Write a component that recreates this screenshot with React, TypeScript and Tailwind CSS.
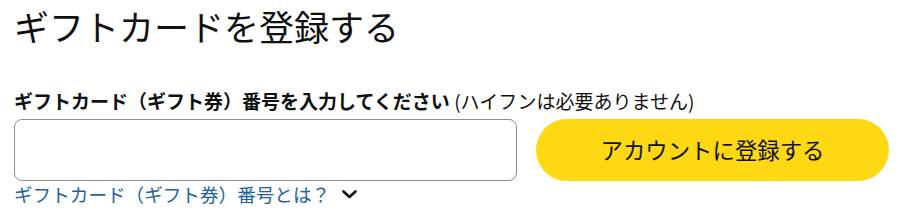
import React from "react";

export default function App() {
  return (
    <div
      className="w-[899px] h-[215px] bg-white pl-[14px] text-[#0f1111] overflow-hidden"
      style={{ fontFamily: '"Noto Sans CJK JP", "Noto Sans", sans-serif' }}
    >
      <h1 className="text-[35px] leading-[52px] font-normal">ギフトカードを登録する</h1>
      <div className="mt-[37px] text-[19px] leading-[24px]">
        <span className="font-bold">ギフトカード（ギフト券）番号を入力してください</span>{" "}
        <span>(ハイフンは必要ありません)</span>
      </div>
      <div className="mt-[6px] flex w-[875px] gap-[19px]">
        <input
          type="text"
          className="h-[62px] w-[503px] rounded-[8px] border border-[#8d9090] bg-white px-3 outline-none"
        />
        <button className="h-[62px] flex-1 rounded-full bg-[#ffd814] text-[22.4px] text-[#0f1111]">
          アカウントに登録する
        </button>
      </div>
      <div className="mt-[1px] flex items-center gap-[12px] text-[18.6px] leading-[24px] text-[#2162a1]">
        <span>ギフトカード（ギフト券）番号とは？</span>
        <svg width="15" height="9" viewBox="0 0 15 9" fill="none">
          <path d="M1.5 1.5 L7.5 7 L13.5 1.5" stroke="#0f1111" strokeWidth="2.6" strokeLinecap="round" strokeLinejoin="round" />
        </svg>
      </div>
    </div>
  );
}
